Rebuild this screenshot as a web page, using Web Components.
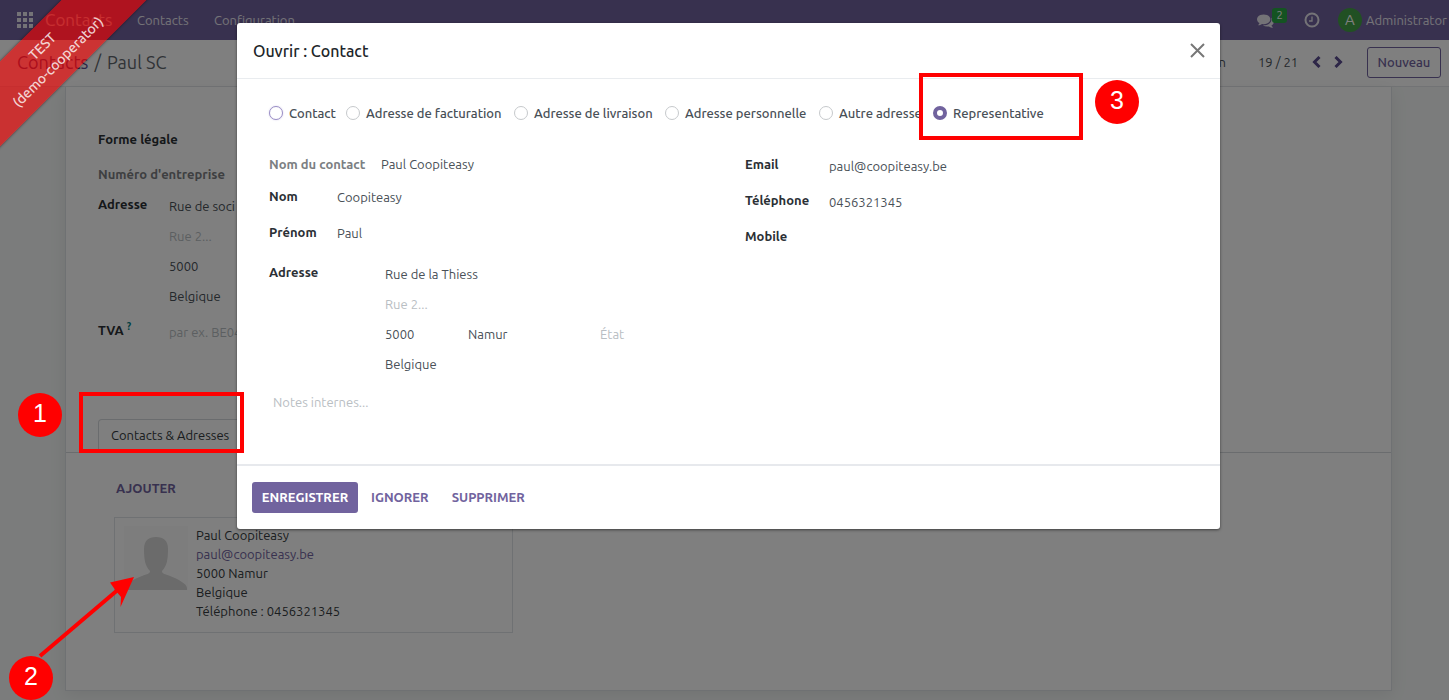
<!DOCTYPE html>
<html lang="fr">
<head>
<meta charset="utf-8">
<title>Contacts - Paul SC</title>
<style>
  html, body { margin: 0; height: 100%; }
  body {
    font: 13px/20px Ubuntu, "Noto Sans", "Open Sans", sans-serif;
    color: #495057;
    background: #f6f9f8;
    overflow: hidden;
  }
</style>
</head>
<body>
<contacts-app></contacts-app>

<script>
const reset = `
  * { box-sizing: border-box; }
  a { text-decoration: none; }
  button { font: inherit; color: inherit; background: none; border: 0; padding: 0; margin: 0; }
  input, textarea { font: inherit; color: inherit; background: none; border: 0; padding: 0; margin: 0; width: 100%; min-width: 0; outline: 0; resize: none; display: block; }
  ::placeholder { color: #b9bec3; opacity: 1; }
`;

function define(name, render) {
  customElements.define(name, class extends HTMLElement {
    connectedCallback() {
      if (this.shadowRoot) return;
      const root = this.attachShadow({ mode: "open" });
      root.innerHTML = `<style>${reset}</style>` + render(n => this.getAttribute(n) ?? "", this);
    }
  });
}

define("app-navbar", () => `
  <style>
    :host { display: block; background: #71639e; color: #e8e6ef; height: 40px; white-space: nowrap; }
    nav { display: flex; align-items: center; height: 100%; padding-left: 17px; }
    a { color: inherit; }
    .apps { display: block; width: 16px; height: 16px; margin-right: 12px; }
    .brand { font-size: 17px; width: 92px; }
    .entry { width: 77px; }
    .right { display: flex; align-items: center; margin-left: auto; }
    .chat { display: flex; align-items: center; width: 47px; }
    .count { background: #28a745; color: #fff; border-radius: 3px; font-size: 11px; line-height: 15px; width: 15px; text-align: center; margin-bottom: 9px; margin-left: -2px; }
    svg { display: block; fill: currentColor; }
    .clock { width: 34px; }
    .user { display: flex; align-items: center; gap: 4px; width: 111px; }
    .face { width: 24px; height: 24px; border-radius: 50%; background: #43a047; color: #fff; font-size: 15px; line-height: 24px; text-align: center; flex: none; }
  </style>
  <nav>
    <button class="apps" aria-label="Applications">
      <svg width="16" height="16" viewBox="0 0 16 16"><path d="M0 0h4v4H0zM6 0h4v4H6zM12 0h4v4h-4zM0 6h4v4H0zM6 6h4v4H6zM12 6h4v4h-4zM0 12h4v4H0zM6 12h4v4H6zM12 12h4v4h-4z"/></svg>
    </button>
    <a class="brand" href="#">Contacts</a>
    <a class="entry" href="#">Contacts</a>
    <a class="entry" href="#">Configuration</a>
    <div class="right">
      <button class="chat" aria-label="Discussions">
        <svg width="17" height="17" viewBox="0 0 1792 1792"><path d="M1408 768q0 139-94 257t-256.500 186.500-353.500 68.500q-86 0-176-16-124 88-278 128-36 9-86 16h-3q-11 0-20.500-8t-11.500-21q-1-3-1-6.500t.5-6.500 2-6l2.500-5 3.500-5.500 4-5 4.500-5 4-4.500q5-6 23-25t26-29.500 22.500-29 25-38.500 20.500-44q-124-72-195-177t-71-224q0-139 94-257t256.500-186.500 353.500-68.500 353.500 68.500 256.500 186.500 94 257zm384 256q0 120-71 224.500t-195 176.500q10 24 20.500 44t25 38.500 22.500 29 26 29.500 23 25q1 1 4 4.500t4.500 5 4 5 3.500 5.500l2.500 5 2 6 .5 6.500-1 6.500q-3 14-13 22t-22 7q-50-7-86-16-154-40-278-128-90 16-176 16-271 0-472-132 58 4 88 4 161 0 309-45t264-129q125-92 192-212t67-254q0-77-23-152 129 71 204 178t75 230z"/></svg>
        <span class="count">2</span>
      </button>
      <button class="clock" aria-label="Activités">
        <svg width="16" height="16" viewBox="0 0 16 16"><circle cx="8" cy="8" r="6.500" fill="none" stroke="currentColor" stroke-width="2"/><path d="M8 4.500V9H5" fill="none" stroke="currentColor" stroke-width="1.300"/></svg>
      </button>
      <a class="user" href="#"><span class="face">A</span><span>Administrator</span></a>
    </div>
  </nav>`);

define("control-panel", () => `
  <style>
    :host { display: flex; align-items: center; height: 47px; padding: 0 8px 2px 17px; background: #fff; border-bottom: 1px solid #e4e7ea; }
    .crumbs { font-size: 18px; line-height: 24px; display: flex; gap: 6px; color: #5f666d; }
    .crumbs a { color: #5b4c8f; }
    .right { display: flex; align-items: center; margin-left: auto; color: #495057; }
    .action { margin-right: 32px; }
    .pager { width: 54px; }
    .step { width: 22px; color: #5b4c8f; }
    .step svg { display: block; fill: none; stroke: currentColor; stroke-width: 3; }
    .new { margin-left: 11px; width: 74px; height: 31px; border: 1px solid #71639e; border-radius: 3px; color: #71639e; font-weight: 500; }
  </style>
  <div class="crumbs"><a href="#">Contacts</a><span>/</span><span>Paul SC</span></div>
  <div class="right">
    <button class="action">Action</button>
    <span class="pager">19 / 21</span>
    <button class="step" aria-label="Précédent"><svg width="9" height="12" viewBox="0 0 9 12"><path d="M7.500 1L2.500 6l5 5"/></svg></button>
    <button class="step" aria-label="Suivant"><svg width="9" height="12" viewBox="0 0 9 12"><path d="M1.500 1l5 5-5 5"/></svg></button>
    <button class="new">Nouveau</button>
  </div>`);

define("form-field", get => `
  <style>
    :host { display: grid; grid-template-columns: var(--label-width, 68px) 1fr; min-height: 24px; }
    :host([compact]) { min-height: 20px; }
    :host([compact]) input { height: 20px; }
    label { font-weight: 600; color: #2b3035; white-space: nowrap; }
    :host([muted]) label { color: #7c7f83; }
    sup { color: #017e84; font-size: 10px; line-height: 0; margin-left: 3px; }
    input { height: var(--field-height, 24px); }
  </style>
  <label for="value">${get("label")}${get("hint") ? `<sup>${get("hint")}</sup>` : ""}</label>
  <input id="value" value="${get("value")}" placeholder="${get("placeholder")}">`);

define("address-fields", get => `
  <style>
    :host { display: grid; grid-template-columns: var(--address-label, 116px) 1fr; }
    label { font-weight: 600; color: #2b3035; }
    .lines { display: grid; gap: 6px; }
    input { height: 24px; }
    .town { display: grid; grid-template-columns: 83px 132px 1fr; }
  </style>
  <label for="street">Adresse</label>
  <div class="lines">
    <input id="street" value="${get("street")}">
    <input aria-label="Rue 2" placeholder="Rue 2...">
    <div class="town">
      <input aria-label="Code postal" value="${get("zip")}">
      <input aria-label="Ville" value="${get("city")}">
      <input aria-label="État" placeholder="${get("state")}">
    </div>
    <input aria-label="Pays" value="${get("country")}">
  </div>`);

define("contact-card", () => `
  <style>
    :host { display: flex; gap: 8px; width: 399px; max-width: 100%; height: 116px; padding: 8px 9px; border: 1px solid #dee2e6; color: #343a40; }
    svg { display: block; flex: none; background: #fbfbfb; }
    .info { display: flex; flex-direction: column; align-items: flex-start; line-height: 19px; }
    a { color: #71639e; }
  </style>
  <svg width="64" height="64" viewBox="0 0 64 64" aria-hidden="true"><path fill="#d6d6d6" d="M32 11c8 0 12 4 12 12 0 10-1 17-6 22 0 3 3 3 8 5 8 3 17 8 17 12v2H1v-2c0-4 9-9 17-12 5-2 8-2 8-5-5-5-6-12-6-22 0-8 4-12 12-12z"/></svg>
  <div class="info">
    <span>Paul Coopiteasy</span>
    <a href="mailto:paul@coopiteasy.be">paul@coopiteasy.be</a>
    <span>5000 Namur</span>
    <span>Belgique</span>
    <span>Téléphone : 0456321345</span>
  </div>`);

define("company-sheet", () => `
  <style>
    :host { display: block; margin: 0 57px 0 65px; background: #fff; border: 1px solid #dfe3e6; border-top: 0; box-shadow: 0 4px 16px rgba(0, 0, 0, .08); padding: 42px 0 57px; }
    .fields { display: grid; padding: 0 32px; width: 50%; --label-width: 71px; --address-label: 71px; }
    .legal { --label-width: 160px; margin-bottom: 11px; }
    .number { --label-width: 160px; margin-bottom: 6px; }
    .vat { margin-top: 12px; }
    .tabs { margin-top: 75px; padding: 0 32px; border-bottom: 1px solid #d5d9dc; height: 34px; }
    .tab { display: block; height: 33px; padding: 0 12px 2px; border: 1px solid #d5d9dc; border-bottom: 0; border-radius: 4px 4px 0 0; color: #343a40; }
    .page { padding: 25px 48px 0; display: flex; flex-direction: column; align-items: flex-start; gap: 19px; }
    .add { color: #71639e; font-weight: 600; margin-left: 2px; }
  </style>
  <section class="fields">
    <form-field class="legal" label="Forme légale"></form-field>
    <form-field class="number" label="Numéro d'entreprise" muted></form-field>
    <address-fields street="Rue de soci" zip="5000" city="" state="" country="Belgique"></address-fields>
    <form-field class="vat" label="TVA" hint="?" placeholder="par ex. BE0477472701"></form-field>
  </section>
  <div class="tabs"><button class="tab">Contacts &amp; Adresses</button></div>
  <div class="page">
    <button class="add">AJOUTER</button>
    <contact-card></contact-card>
  </div>`);

define("type-picker", () => {
  const kinds = ["Contact", "Adresse de facturation", "Adresse de livraison", "Adresse personnelle", "Autre adresse", "Representative"];
  return `
  <style>
    :host { display: grid; grid-template-columns: 77px 168px 151px 154px 114px 1fr; }
    label { display: flex; align-items: center; gap: 6px; font-weight: 500; white-space: nowrap; }
    input { appearance: none; flex: none; width: 14px; height: 14px; border: 1px solid #c6c9cc; border-radius: 50%; background: #fff; }
    label:first-of-type input { border-color: #9a8ec6; box-shadow: 0 0 2px #d5cfe8; }
    input:checked { border: 4px solid #71639e; }
  </style>` + kinds.map((k, i) => `<label><input type="radio" name="kind"${i === 5 ? " checked" : ""}>${k}</label>`).join("");
});

define("contact-dialog", () => `
  <style>
    :host { display: flex; flex-direction: column; width: 100%; max-width: 983px; background: #fff; border-radius: 3px; box-shadow: 0 1px 3px rgba(0, 0, 0, .5); }
    header { display: flex; align-items: center; justify-content: space-between; padding: 0 15px 0 16px; height: 56px; border-bottom: 1px solid #e9ecef; }
    h1 { margin: 0; font-size: 16px; line-height: 24px; font-weight: 500; color: #212529; }
    header svg { display: block; stroke: #777; stroke-width: 2; fill: none; }
    .body { padding: 24px 32px 0; height: 385px; }
    .columns { display: grid; grid-template-columns: 476px 1fr; margin-top: 31px; }
    .left, .right { display: grid; gap: 12px; align-content: start; }
    .left { --field-height: 21px; }
    .right { --label-width: 84px; }
    .full { --label-width: 112px; }
    address-fields { margin-top: 4px; }
    textarea { height: 40px; padding-left: 4px; margin-top: 16px; }
    footer { display: flex; align-items: center; gap: 23px; height: 65px; padding: 0 15px; border-top: 2px solid #e7e9ed; color: #71639e; font-weight: 600; }
    footer button { height: 31px; padding-bottom: 2px; }
    .save { background: #71639e; color: #fff; width: 106px; border-radius: 3px; margin-right: -10px; }
  </style>
  <header>
    <h1>Ouvrir : Contact</h1>
    <button aria-label="Fermer"><svg width="15" height="15" viewBox="0 0 15 15"><path d="M1 1l13 13M14 1L1 14"/></svg></button>
  </header>
  <div class="body">
    <type-picker></type-picker>
    <div class="columns">
      <div class="left">
        <form-field class="full" compact muted label="Nom du contact" value="Paul Coopiteasy"></form-field>
        <form-field label="Nom" value="Coopiteasy"></form-field>
        <form-field label="Prénom" value="Paul"></form-field>
        <address-fields street="Rue de la Thiess" zip="5000" city="Namur" state="État" country="Belgique"></address-fields>
      </div>
      <div class="right">
        <form-field label="Email" value="paul@coopiteasy.be"></form-field>
        <form-field label="Téléphone" value="0456321345"></form-field>
        <form-field label="Mobile"></form-field>
      </div>
    </div>
    <textarea aria-label="Notes internes" placeholder="Notes internes..."></textarea>
  </div>
  <footer>
    <button class="save">ENREGISTRER</button>
    <button>IGNORER</button>
    <button>SUPPRIMER</button>
  </footer>`);

define("test-ribbon", () => `
  <style>
    :host { position: absolute; left: -100px; top: 24px; width: 300px; height: 60px; display: grid; align-content: center; transform: rotate(-45deg); background: rgba(255, 0, 0, .6); box-shadow: 0 0 3px rgba(0, 0, 0, .5); color: rgba(255, 255, 255, .8); font-size: 14px; font-weight: 500; line-height: 22px; text-align: center; pointer-events: none; }
  </style>
  <span>TEST</span><span>(demo-cooperator)</span>`);

define("step-marker", () => `
  <style>
    :host { position: absolute; width: 44px; height: 44px; border-radius: 50%; background: #f00; color: #fff; font: 25px/40px "Liberation Sans", Arial, sans-serif; text-align: center; }
  </style>
  <slot></slot>`);

define("highlight-box", () => `
  <style>:host { position: absolute; border: 4px solid #f00; box-sizing: border-box; }</style>`);

define("contacts-app", () => `
  <style>
    :host { display: block; position: relative; height: 100vh; overflow: hidden; }
    .backdrop { position: absolute; inset: 0; background: rgba(0, 0, 0, .5); display: flex; justify-content: center; align-items: flex-start; padding: 23px 0 0 8px; }
    .tab-box { left: 79px; top: 392px; width: 165px; height: 61px; }
    .kind-box { left: 919px; top: 73px; width: 164px; height: 67px; }
    .one { left: 18px; top: 393px; }
    .two { left: 9px; top: 656px; }
    .three { left: 1095px; top: 80px; }
    .arrow { position: absolute; left: 30px; top: 570px; }
  </style>
  <app-navbar></app-navbar>
  <control-panel></control-panel>
  <company-sheet></company-sheet>
  <div class="backdrop"><contact-dialog></contact-dialog></div>
  <test-ribbon></test-ribbon>
  <highlight-box class="tab-box"></highlight-box>
  <highlight-box class="kind-box"></highlight-box>
  <svg class="arrow" width="110" height="90" viewBox="0 0 110 90" aria-hidden="true"><path d="M10 86L90 18" stroke="#f00" stroke-width="4"/><path d="M104 7L80 12.500 86 21 91 27 90.500 37z" fill="#f00"/></svg>
  <step-marker class="one">1</step-marker>
  <step-marker class="two">2</step-marker>
  <step-marker class="three">3</step-marker>`);
</script>
</body>
</html>
